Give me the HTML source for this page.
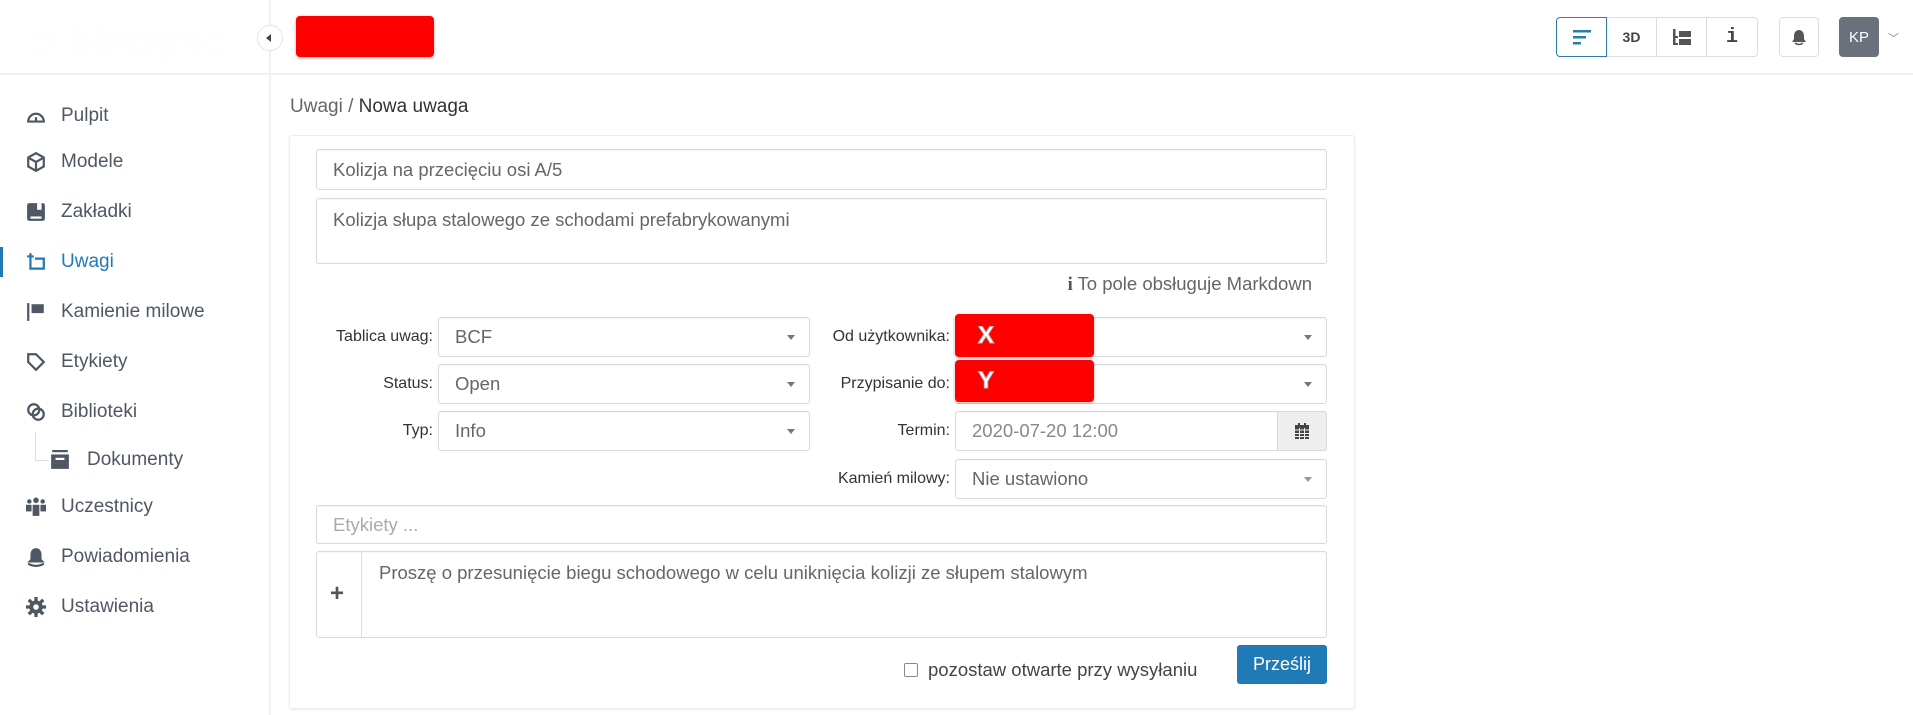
<!DOCTYPE html>
<html><head><meta charset="utf-8"><style>
*{box-sizing:border-box;margin:0;padding:0}
body{width:1913px;height:715px;background:#fff;position:relative;overflow:hidden;font-family:"Liberation Sans",sans-serif;color:#555}
.abs{position:absolute}
.hline{left:0;top:73px;width:1913px;height:2px;background:#f1f1f1}
.vline{left:269px;top:0;width:2px;height:715px;background:#f1f1f1}
.nav{left:0;width:269px;height:40px;font-size:19px;color:#4e5763;display:flex;align-items:center}
.nav .ic{position:absolute;left:26px;width:20px;height:20px}
.nav span{position:absolute;left:61px}
.inp{border:1px solid #d9d9d9;border-radius:3px;background:#fff;font-size:18.5px;color:#666;padding-left:16px;display:flex;align-items:center;box-shadow:inset 0 1px 1px rgba(0,0,0,.04)}
.lbl{font-size:16px;color:#333;text-align:right;width:160px;white-space:nowrap}
.caret{position:absolute;right:14px;top:50%;margin-top:-2px;border-left:4px solid transparent;border-right:4px solid transparent;border-top:5px solid #777}
.red{background:#ff0000;border-radius:4px;box-shadow:0 1px 3px rgba(0,0,0,.3)}
.tb{top:17px;height:40px;border:1px solid #ddd;display:flex;align-items:center;justify-content:center;font-weight:bold;color:#444;font-size:14px}
</style></head><body>
<div class="abs hline"></div>
<div class="abs vline"></div>
<div class="abs" style="left:27px;top:18px;font-size:38px;color:#fefefe;font-weight:bold">⊃ bimsync</div>
<div class="abs" style="left:257px;top:25px;width:26px;height:26px;border-radius:50%;background:#fff;border:1px solid #e6e6e6"></div>
<div class="abs" style="left:266px;top:34px;border-top:4px solid transparent;border-bottom:4px solid transparent;border-right:5px solid #444"></div>
<div class="abs red" style="left:296px;top:16px;width:138px;height:41px"></div>

<div class="abs tb" style="left:1556px;width:51px;border:1px solid #2a7ea6;border-radius:4px 0 0 4px;z-index:2">
<svg width="20" height="16"><rect x="1" y="1" width="18" height="2.5" fill="#2a7ea6"/><rect x="1" y="7" width="13" height="2.5" fill="#2a7ea6"/><rect x="1" y="13" width="8" height="2.5" fill="#2a7ea6"/></svg></div>
<div class="abs tb" style="left:1606px;width:51px">3D</div>
<div class="abs tb" style="left:1656px;width:51px"><svg width="20" height="18"><rect x="1" y="1" width="2.5" height="16" fill="#555"/><rect x="1" y="8" width="5" height="2" fill="#555"/><rect x="1" y="15" width="5" height="2" fill="#555"/><rect x="7" y="3" width="12" height="6" fill="#555"/><rect x="7" y="11" width="12" height="6" fill="#555"/></svg></div>
<div class="abs tb" style="left:1706px;width:52px;border-radius:0 4px 4px 0;font-family:'Liberation Mono',monospace;font-size:20px">i</div>
<div class="abs tb" style="left:1779px;width:40px;border-radius:4px"><svg width="18" height="18"><path d="M9 2c-3 0-5 2.5-5 6v3l-2 3h14l-2-3V8c0-3.5-2-6-5-6z" fill="#555"/><path d="M5 15q4 3 8 0" stroke="#555" stroke-width="1.5" fill="none"/></svg></div>
<div class="abs" style="left:1839px;top:17px;width:40px;height:40px;background:#6a717c;border-radius:4px;color:#fff;font-size:15px;display:flex;align-items:center;justify-content:center">KP</div>
<div class="abs" style="left:1888px;top:30px;font-size:11px;color:#888">﹀</div>

<div class="abs nav" style="top:96px"><svg class="ic" viewBox="0 0 18 18"><path d="M2 14a7 7 0 0114 0z" fill="none" stroke="#4e5763" stroke-width="2"/><path d="M9 14v-4" stroke="#4e5763" stroke-width="2"/></svg><span>Pulpit</span></div>
<div class="abs nav" style="top:142px"><svg class="ic" viewBox="0 0 18 18"><path d="M9 1l7 4v8l-7 4-7-4V5z M2 5l7 4 7-4 M9 9v8" fill="none" stroke="#4e5763" stroke-width="2"/></svg><span>Modele</span></div>
<div class="abs nav" style="top:192px"><svg class="ic" viewBox="0 0 18 18"><rect x="1" y="1" width="16" height="16" rx="2" fill="#4e5763"/><rect x="4" y="13" width="10" height="2" fill="#fff"/><rect x="10" y="1" width="4" height="6" fill="#fff"/></svg><span>Zakładki</span></div>
<div class="abs" style="left:0;top:247px;width:3px;height:30px;background:#1f7ab5"></div>
<div class="abs nav" style="top:242px;color:#1f7ab5"><svg class="ic" viewBox="0 0 18 18"><path d="M4 3v12h12V6H8 M1 4h6 M4 1v6" fill="none" stroke="#1f7ab5" stroke-width="2"/></svg><span>Uwagi</span></div>
<div class="abs nav" style="top:292px"><svg class="ic" viewBox="0 0 18 18"><rect x="1" y="1" width="2" height="16" fill="#4e5763"/><rect x="5" y="2" width="11" height="8" fill="#4e5763"/></svg><span>Kamienie milowe</span></div>
<div class="abs nav" style="top:342px"><svg class="ic" viewBox="0 0 18 18"><path d="M2 2h7l7 7-7 7-7-7z" fill="none" stroke="#4e5763" stroke-width="2"/></svg><span>Etykiety</span></div>
<div class="abs nav" style="top:392px"><svg class="ic" viewBox="0 0 18 18"><circle cx="7" cy="7" r="5" fill="none" stroke="#4e5763" stroke-width="2"/><circle cx="11" cy="11" r="5" fill="none" stroke="#4e5763" stroke-width="2"/></svg><span>Biblioteki</span></div>
<div class="abs" style="left:35px;top:432px;width:1px;height:28px;background:#ddd"></div>
<div class="abs" style="left:35px;top:460px;width:14px;height:1px;background:#ddd"></div>
<div class="abs nav" style="top:440px"><svg class="ic" viewBox="0 0 18 18" style="left:50px;width:20px;height:20px"><rect x="2" y="0" width="14" height="2" fill="#4e5763"/><rect x="1" y="4" width="16" height="13" fill="#4e5763"/><rect x="5" y="7" width="8" height="2" fill="#fff"/></svg><span style="left:87px">Dokumenty</span></div>
<div class="abs nav" style="top:487px"><svg class="ic" viewBox="0 0 18 18"><circle cx="3" cy="4" r="2" fill="#4e5763"/><circle cx="9" cy="3" r="2.5" fill="#4e5763"/><circle cx="15" cy="4" r="2" fill="#4e5763"/><rect x="0" y="7" width="5" height="6" fill="#4e5763"/><rect x="6" y="7" width="6" height="10" fill="#4e5763"/><rect x="13" y="7" width="5" height="6" fill="#4e5763"/></svg><span>Uczestnicy</span></div>
<div class="abs nav" style="top:537px"><svg class="ic" viewBox="0 0 18 18"><path d="M9 1c-3 0-5 2.5-5 6v4l-3 3h16l-3-3V7c0-3.5-2-6-5-6z" fill="#4e5763"/><path d="M2 15q7 4 14 0" stroke="#4e5763" stroke-width="2" fill="none"/></svg><span>Powiadomienia</span></div>
<div class="abs nav" style="top:587px"><svg class="ic" viewBox="0 0 18 18"><circle cx="9" cy="9" r="6" fill="#4e5763"/><path d="M9 0v18M0 9h18M2.5 2.5l13 13M15.5 2.5l-13 13" stroke="#4e5763" stroke-width="3"/><circle cx="9" cy="9" r="2.5" fill="#fff"/></svg><span>Ustawienia</span></div>

<div class="abs" style="left:290px;top:96px;font-size:19px;color:#666">Uwagi / <span style="color:#333">Nowa uwaga</span></div>
<div class="abs" style="left:289px;top:135px;width:1066px;height:574px;border:1px solid #eee;border-radius:3px;box-shadow:0 1px 2px rgba(0,0,0,.08)"></div>

<div class="abs inp" style="left:316px;top:149px;width:1011px;height:41px">Kolizja na przecięciu osi A/5</div>
<div class="abs inp" style="left:316px;top:198px;width:1011px;height:66px;align-items:flex-start;padding-top:10px">Kolizja słupa stalowego ze schodami prefabrykowanymi</div>
<div class="abs" style="left:1000px;top:273px;width:312px;text-align:right;font-size:18.5px;color:#666;white-space:nowrap"><b style="font-family:'Liberation Serif',serif;color:#555">i</b> To pole obsługuje Markdown</div>

<div class="abs lbl" style="left:273px;top:328px">Tablica uwag:</div>
<div class="abs inp" style="left:438px;top:317px;width:372px;height:40px">BCF<i class="caret"></i></div>
<div class="abs lbl" style="left:273px;top:375px">Status:</div>
<div class="abs inp" style="left:438px;top:364px;width:372px;height:40px">Open<i class="caret"></i></div>
<div class="abs lbl" style="left:273px;top:422px">Typ:</div>
<div class="abs inp" style="left:438px;top:411px;width:372px;height:40px">Info<i class="caret"></i></div>

<div class="abs lbl" style="left:790px;top:328px">Od użytkownika:</div>
<div class="abs inp" style="left:955px;top:317px;width:372px;height:40px"><i class="caret"></i></div>
<div class="abs lbl" style="left:790px;top:375px">Przypisanie do:</div>
<div class="abs inp" style="left:955px;top:364px;width:372px;height:40px"><i class="caret"></i></div>
<div class="abs red" style="left:955px;top:314px;width:139px;height:43px;color:#fff;font-size:24px;font-weight:bold;padding:8px 0 0 23px;-webkit-text-stroke:1px #bbb">X</div>
<div class="abs red" style="left:955px;top:360px;width:139px;height:42px;color:#fff;font-size:24px;font-weight:bold;padding:7px 0 0 23px;-webkit-text-stroke:1px #bbb">Y</div>
<div class="abs lbl" style="left:790px;top:422px">Termin:</div>
<div class="abs inp" style="left:955px;top:411px;width:372px;height:40px;color:#888">2020-07-20 12:00</div>
<div class="abs" style="left:1277px;top:411px;width:50px;height:40px;background:#eee;border:1px solid #d9d9d9;border-radius:0 3px 3px 0;display:flex;align-items:center;justify-content:center"><svg width="14" height="16"><rect x="0" y="2" width="14" height="14" fill="#444"/><rect x="3" y="0" width="2" height="3" fill="#444"/><rect x="9" y="0" width="2" height="3" fill="#444"/><path d="M0 7h14M0 10.5h14M0 13.5h14M4.5 5v11M9.5 5v11" stroke="#eee" stroke-width="1"/></svg></div>
<div class="abs lbl" style="left:790px;top:470px">Kamień milowy:</div>
<div class="abs inp" style="left:955px;top:459px;width:372px;height:40px">Nie ustawiono<i class="caret" style="border-top-color:#999"></i></div>

<div class="abs inp" style="left:316px;top:505px;width:1011px;height:39px;color:#aaa">Etykiety ...</div>
<div class="abs inp" style="left:316px;top:551px;width:1011px;height:87px;align-items:flex-start;padding:10px 0 0 62px">Proszę o przesunięcie biegu schodowego w celu uniknięcia kolizji ze słupem stalowym</div>
<div class="abs" style="left:361px;top:552px;width:1px;height:85px;background:#ddd"></div>
<div class="abs" style="left:330px;top:580px;font-size:24px;font-weight:bold;color:#555">+</div>

<div class="abs" style="left:904px;top:663px;width:14px;height:14px;border:1px solid #888;border-radius:2px"></div>
<div class="abs" style="left:928px;top:659px;font-size:18.5px;color:#444;white-space:nowrap">pozostaw otwarte przy wysyłaniu</div>
<div class="abs" style="left:1237px;top:645px;width:90px;height:39px;background:#1f7ab5;border-radius:3px;color:#fff;font-size:18px;display:flex;align-items:center;justify-content:center">Prześlij</div>
</body></html>
